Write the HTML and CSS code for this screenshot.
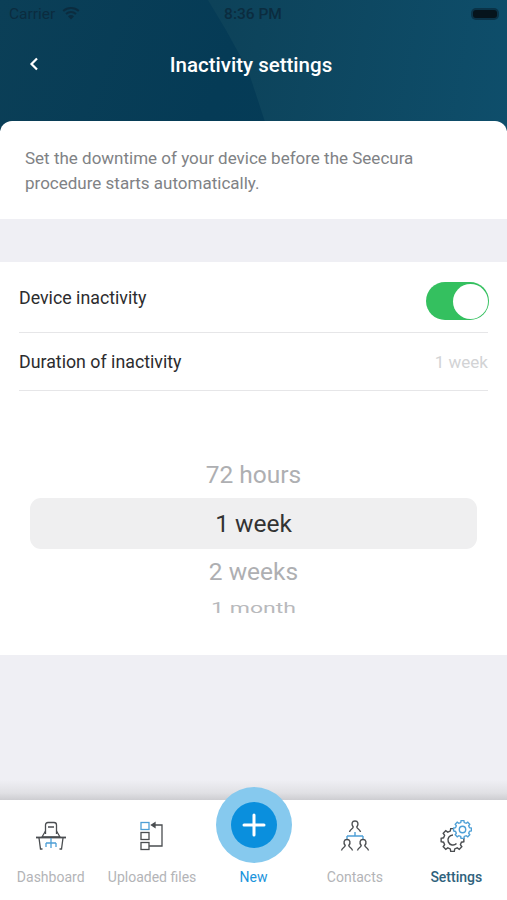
FILE: index.html
```html
<!DOCTYPE html>
<html lang="en">
<head>
    <meta charset="UTF-8">
    <meta name="viewport" content="width=device-width, initial-scale=1.0">
    <title>Inactivity settings</title>
    <link rel="stylesheet" href="styles.css">
</head>
<body>
    <div class="screen">
        <div class="top">
            <div class="status-bar">
                <div class="carrier">
                    <span>Carrier</span>
                    <svg class="wifi" width="18" height="14" viewBox="0 0 18 14">
                        <path d="M9 13.5 6 10.2a4.6 4.6 0 0 1 6 0z" fill="#0b2c3f"/>
                        <path d="M4 8a7.6 7.6 0 0 1 10 0" fill="none" stroke="#0b2c3f" stroke-width="2"/>
                        <path d="M1.2 4.9a11.8 11.8 0 0 1 15.6 0" fill="none" stroke="#0b2c3f" stroke-width="2"/>
                    </svg>
                </div>
                <div class="clock">8:36 PM</div>
                <div class="battery-slot"><div class="battery"></div></div>
            </div>
            <div class="nav-bar">
                <svg class="back" width="12" height="16" viewBox="0 0 12 16">
                    <path d="M9 2.5 3.5 8 9 13.5" fill="none" stroke="#fff" stroke-width="2.2"/>
                </svg>
                <h1>Inactivity settings</h1>
            </div>
        </div>

        <div class="intro">
            <p>Set the downtime of your device before the Seecura procedure starts automatically.</p>
        </div>

        <div class="settings">
            <div class="row row-switch">
                <span>Device inactivity</span>
                <div class="switch"><div class="knob"></div></div>
            </div>
            <div class="row row-duration">
                <span>Duration of inactivity</span>
                <span class="row-value">1 week</span>
            </div>
            <div class="picker">
                <div class="pick pick-near">72 hours</div>
                <div class="pick pick-selected">1 week</div>
                <div class="pick pick-near">2 weeks</div>
                <div class="pick pick-far">1 month</div>
            </div>
        </div>

        <div class="spacer"></div>

        <div class="tabbar">
            <div class="tab">
                <div class="tab-icon">
                    <svg width="32" height="30" viewBox="0 0 32 30" fill="none" stroke="#4a4d50" stroke-width="1.3">
                        <path d="M10.5 13V4Q10.5 1.5 13 1.5h6Q21.5 1.5 21.5 4V13"/>
                        <path d="M13 6h6" stroke-width="1.5"/>
                        <path d="M10.5 10 7 16h18l-3.500-6"/>
                        <path d="M1 16.5h30" stroke-width="1.8"/>
                        <path d="M4 17l1.5 11h2M28 17l-1.5 11h-2"/>
                        <path d="M16 17v10M11 22h10M11 22v4M21 22v4" stroke="#4d9fd6"/>
                    </svg>
                </div>
                <div class="tab-label">Dashboard</div>
            </div>
            <div class="tab">
                <div class="tab-icon">
                    <svg width="26" height="30" viewBox="0 0 26 30" fill="none" stroke="#4a4d50" stroke-width="1.3">
                        <rect x="2" y="1.5" width="8" height="7" stroke="#4d9fd6"/>
                        <rect x="2" y="11.5" width="8" height="7"/>
                        <rect x="2" y="21.5" width="8" height="7"/>
                        <path d="M10 25h13V4h-9"/>
                        <path d="M16 1.8 12.5 4 16 6.2z" fill="#4a4d50"/>
                    </svg>
                </div>
                <div class="tab-label">Uploaded files</div>
            </div>
            <div class="tab tab-new">
                <div class="tab-icon"></div>
                <div class="tab-label">New</div>
            </div>
            <div class="tab">
                <div class="tab-icon">
                    <svg width="30" height="32" viewBox="0 0 30 32" fill="none" stroke="#4a4d50" stroke-width="1.4">
                        <defs>
                            <path id="person" d="M-5.5 11C-5 8-2 8-1.8 6-4 3-3 0 0 0S4 3 1.8 6C2 8 5 8 5.5 11"/>
                        </defs>
                        <use href="#person" transform="translate(15 1)"/>
                        <path d="M15 12v4M7 16h16M7 16v3M23 16v3" stroke="#4d9fd6"/>
                        <use href="#person" transform="translate(7 19.5)"/>
                        <use href="#person" transform="translate(23 19.5)"/>
                    </svg>
                </div>
                <div class="tab-label">Contacts</div>
            </div>
            <div class="tab tab-active">
                <div class="tab-icon">
                    <svg width="32" height="32" viewBox="0 0 32 32" fill="none">
                        <defs>
                            <polygon id="gear" points="9.88,1.56 7.76,1.94 6.86,4.12 8.09,5.88 5.88,8.09 4.12,6.86 1.94,7.76 1.56,9.88 -1.56,9.88 -1.94,7.76 -4.12,6.86 -5.88,8.09 -8.09,5.88 -6.86,4.12 -7.76,1.94 -9.88,1.56 -9.88,-1.56 -7.76,-1.94 -6.86,-4.12 -8.09,-5.88 -5.88,-8.09 -4.12,-6.86 -1.94,-7.76 -1.56,-9.88 1.56,-9.88 1.94,-7.76 4.12,-6.86 5.88,-8.09 8.09,-5.88 6.86,-4.12 7.76,-1.94 9.88,-1.56"/>
                        </defs>
                        <use href="#gear" transform="translate(12.5 20) scale(1.15)" stroke="#4a4d50" stroke-width="1.2"/>
                        <path d="M16.5 23.5a5 5 0 1 1-3.5-8.5" stroke="#4a4d50" stroke-width="1.5"/>
                        <use href="#gear" transform="translate(22.5 9.5) scale(.9)" fill="#fff" stroke="#4d9fd6" stroke-width="1.5"/>
                        <circle cx="22.5" cy="9.5" r="3.2" stroke="#4d9fd6" stroke-width="1.4"/>
                    </svg>
                </div>
                <div class="tab-label">Settings</div>
            </div>
            <div class="fab">
                <div class="fab-inner">
                    <svg width="24" height="24" viewBox="0 0 24 24">
                        <path d="M12 2v20M2 12h20" stroke="#fff" stroke-width="3" stroke-linecap="round"/>
                    </svg>
                </div>
            </div>
        </div>
    </div>
</body>
</html>
```

FILE: styles.css
```css
* {
    box-sizing: border-box;
}
body {
    margin: 0;
    font-family: 'Roboto', sans-serif;
    background-color: #efeff4;
}
.screen {
    width: 507px;
    height: 900px;
    display: flex;
    flex-direction: column;
    overflow: hidden;
}
.top {
    position: relative;
    height: 131px;
    margin-bottom: -10px;
    background: linear-gradient(110deg, #0b3f57 0%, #053b56 45%, #043d5a 100%);
}
.top::before {
    content: "";
    position: absolute;
    top: 0;
    left: 0;
    right: 0;
    bottom: 0;
    background: linear-gradient(100deg, #0d4259 40%, #0e4e6b 100%);
    clip-path: polygon(208px 0, 100% 0, 100% 100%, 268px 100%, 248px 70px, 226px 30px);
}
.status-bar {
    position: relative;
    height: 28px;
    padding: 0 10px 0 9px;
    display: flex;
    align-items: center;
    justify-content: space-between;
    font-size: 15.5px;
    color: #0b2c3f;
}
.carrier {
    width: 160px;
    display: flex;
    align-items: center;
    gap: 7px;
}
.wifi {
    margin-top: -3px;
}
.clock {
    font-weight: 500;
}
.battery-slot {
    width: 160px;
    display: flex;
    justify-content: flex-end;
}
.battery {
    width: 24px;
    height: 8px;
    background-color: #06141c;
    border-radius: 3px;
    box-shadow: 0 0 0 2px #0a3348;
}
.nav-bar {
    position: relative;
    height: 72px;
    display: flex;
    align-items: center;
    justify-content: center;
}
.nav-bar h1 {
    margin: 2px 5px 0 0;
    font-size: 20.5px;
    font-weight: 500;
    color: #fff;
}
.back {
    position: absolute;
    left: 28px;
    top: 28px;
}
.intro {
    position: relative;
    height: 98px;
    padding: 25px 25px 0;
    background-color: #fff;
    border-radius: 12px 12px 0 0;
}
.intro p {
    margin: 0;
    font-size: 17px;
    line-height: 25px;
    color: #808285;
}
.settings {
    margin-top: 43px;
    height: 393px;
    padding: 0 19px;
    background-color: #fff;
}
.row {
    display: flex;
    align-items: center;
    justify-content: space-between;
    border-bottom: 1.5px solid #e6e6e8;
    font-size: 17.8px;
    color: #2c2c2e;
}
.row-switch {
    height: 71px;
}
.row-duration {
    height: 58px;
}
.row-value {
    font-size: 17px;
    color: #d2d3d5;
}
.switch {
    width: 63px;
    height: 38px;
    margin: 8px -1px 0 0;
    padding: 1.5px;
    display: flex;
    justify-content: flex-end;
    background-color: #34c05f;
    border-radius: 19px;
}
.knob {
    width: 35px;
    height: 35px;
    background-color: #fff;
    border-radius: 50%;
}
.picker {
    margin: 61px 11px 0;
    display: flex;
    flex-direction: column;
    align-items: center;
    text-align: center;
}
.pick {
    width: 100%;
    color: #aeafb2;
}
.pick-near {
    height: 46px;
    line-height: 46px;
    font-size: 24.5px;
}
.pick-selected {
    height: 51px;
    line-height: 51px;
    font-size: 24.5px;
    color: #333;
    background-color: #efeff0;
    border-radius: 11px;
}
.pick-far {
    height: 19px;
    line-height: 19px;
    margin-top: 4px;
    font-size: 23px;
    color: #b8b9bc;
    transform: scaleY(0.65);
}
.spacer {
    flex: 1;
    background: linear-gradient(#efeff4 calc(100% - 20px), #e0e0e4 calc(100% - 7px), #cdcdd1 100%);
}
.tabbar {
    position: relative;
    height: 100px;
    padding-top: 19px;
    display: grid;
    grid-template-columns: repeat(5, 1fr);
    background-color: #fff;
}
.tab {
    display: flex;
    flex-direction: column;
    align-items: center;
}
.tab-icon {
    height: 34px;
    display: flex;
    align-items: center;
    justify-content: center;
}
.tab-label {
    margin-top: 15px;
    font-size: 14px;
    line-height: 18px;
    color: #b3b4b7;
}
.tab-new .tab-label {
    color: #1b94dc;
}
.tab-active .tab-label {
    font-weight: 500;
    color: #2f627c;
}
.fab {
    position: absolute;
    left: 216px;
    top: -13px;
    width: 76px;
    height: 76px;
    display: flex;
    align-items: center;
    justify-content: center;
    background-color: #86c9ee;
    border-radius: 50%;
}
.fab-inner {
    width: 46px;
    height: 46px;
    display: flex;
    align-items: center;
    justify-content: center;
    background-color: #0a8fdd;
    border-radius: 50%;
}
```
